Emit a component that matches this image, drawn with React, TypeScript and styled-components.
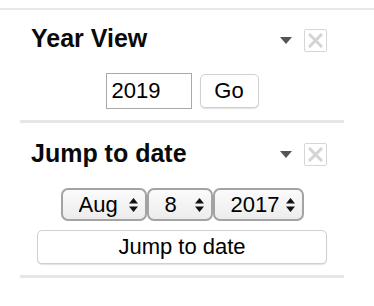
import * as React from "react";
import styled, { createGlobalStyle } from "styled-components";

const GlobalStyle = createGlobalStyle`
  html, body {
    margin: 0;
    padding: 0;
    background: #ffffff;
    font-family: "Liberation Sans", Arial, sans-serif;
    color: #000;
  }
`;

const Page = styled.div`
  width: 374px;
  height: 306px;
  padding-top: 8px;
  box-sizing: border-box;
`;

const TopRule = styled.div`
  height: 2px;
  background: #e8e8e8;
`;

const Sidebar = styled.div`
  width: 324px;
  margin-left: 20px;
`;

const Portlet = styled.section<{ $top: number }>`
  padding-top: ${(p) => p.$top}px;
  border-bottom: 3px solid #e6e6e6;
`;

const Header = styled.div`
  display: flex;
  align-items: center;
  padding: 0 17px 0 11px;
  height: 28px;
`;

const Title = styled.h2`
  flex: 1;
  margin: 0;
  font-size: 25px;
  line-height: 28px;
  font-weight: bold;
  color: #0a0a0a;
`;

const Controls = styled.div<{ $shift: number }>`
  display: flex;
  align-items: center;
  gap: 12px;
  transform: translateY(${(p) => p.$shift}px);
`;

const Toggle = styled.span`
  width: 0;
  height: 0;
  border-left: 6px solid transparent;
  border-right: 6px solid transparent;
  border-top: 7px solid #555;
`;

const CloseBox = styled.span`
  display: flex;
  align-items: center;
  justify-content: center;
  width: 21px;
  height: 21px;
  border: 1px solid #d6d6d6;
  border-radius: 2px;
`;

const Body = styled.div<{ $pad: string }>`
  display: flex;
  flex-direction: column;
  align-items: center;
  gap: 9px;
  padding: ${(p) => p.$pad};
`;

const Row = styled.div<{ $gap: number }>`
  display: flex;
  align-items: center;
  gap: ${(p) => p.$gap}px;
`;

const YearInput = styled.input`
  width: 86px;
  height: 36px;
  box-sizing: border-box;
  border: 1px solid #a9a9a9;
  padding: 0 0 0 5px;
  font-family: "Liberation Sans", Arial, sans-serif;
  font-size: 22px;
  color: #000;
  outline: none;
`;

const Button = styled.button<{ $width: number }>`
  width: ${(p) => p.$width}px;
  height: 34px;
  box-sizing: border-box;
  border: 1px solid #d0d0d0;
  border-radius: 5px;
  background: #ffffff;
  box-shadow: 0 1px 1px rgba(0, 0, 0, 0.12);
  font-family: "Liberation Sans", Arial, sans-serif;
  font-size: 22px;
  color: #000;
  padding: 0;
`;

const SelectWrap = styled.span`
  position: relative;
  display: inline-flex;
`;

const Select = styled.select<{ $width: number }>`
  appearance: none;
  -webkit-appearance: none;
  width: ${(p) => p.$width}px;
  height: 33px;
  box-sizing: border-box;
  border: 2px solid #a3a3a3;
  border-radius: 7px;
  background: linear-gradient(#fbfbfb, #ececec);
  padding: 0 0 0 16px;
  font-family: "Liberation Sans", Arial, sans-serif;
  font-size: 22px;
  color: #000;
  outline: none;
`;

const Arrows = styled.svg`
  position: absolute;
  right: 9px;
  top: 10px;
  pointer-events: none;
`;

const CloseIcon = () => (
  <svg width="15" height="15" viewBox="0 0 15 15">
    <path d="M2 2 L13 13 M13 2 L2 13" stroke="#d4d4d4" strokeWidth="3" strokeLinecap="square" />
  </svg>
);

const DateSelect: React.FC<{ width: number; value: string; options: string[] }> = ({ width, value, options }) => (
  <SelectWrap>
    <Select $width={width} defaultValue={value}>
      {options.map((o) => (
        <option key={o}>{o}</option>
      ))}
    </Select>
    <Arrows width="9" height="14" viewBox="0 0 9 14">
      <path d="M4.5 0 L9 5.5 L0 5.5 Z M4.5 14 L9 8.5 L0 8.5 Z" fill="#111" />
    </Arrows>
  </SelectWrap>
);

const months = ["Jan", "Feb", "Mar", "Apr", "May", "Jun", "Jul", "Aug", "Sep", "Oct", "Nov", "Dec"];
const days = Array.from({ length: 31 }, (_, i) => String(i + 1));
const years = Array.from({ length: 11 }, (_, i) => String(2012 + i));

export default function App() {
  return (
    <>
      <GlobalStyle />
      <Page>
        <TopRule />
        <Sidebar>
          <Portlet $top={14}>
            <Header>
              <Title>Year View</Title>
              <Controls $shift={2}>
                <Toggle />
                <CloseBox>
                  <CloseIcon />
                </CloseBox>
              </Controls>
            </Header>
            <Body $pad="21px 0 11px">
              <Row $gap={8}>
                <YearInput defaultValue="2019" />
                <Button $width={59}>Go</Button>
              </Row>
            </Body>
          </Portlet>
          <Portlet $top={16}>
            <Header>
              <Title>Jump to date</Title>
              <Controls $shift={1}>
                <Toggle />
                <CloseBox>
                  <CloseIcon />
                </CloseBox>
              </Controls>
            </Header>
            <Body $pad="21px 0 11px">
              <Row $gap={0}>
                <DateSelect width={86} value="Aug" options={months} />
                <DateSelect width={66} value="8" options={days} />
                <DateSelect width={91} value="2017" options={years} />
              </Row>
              <Button $width={290}>Jump to date</Button>
            </Body>
          </Portlet>
        </Sidebar>
      </Page>
    </>
  );
}
